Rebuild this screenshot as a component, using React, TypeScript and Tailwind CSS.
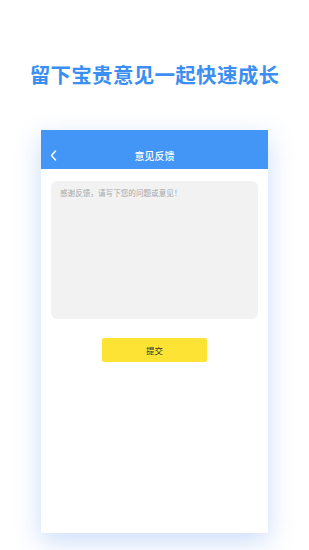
import React from "react";

export default function App() {
  const cjk = { fontFamily: '"Noto Sans CJK SC", "Noto Sans", sans-serif' };
  return (
    <div className="w-[309px] h-[550px] bg-white overflow-hidden flex flex-col items-center" style={cjk}>
      <div className="mt-[59px] h-[30px] flex items-center justify-center text-[20.5px] font-bold text-[#3b8ff2] tracking-[0.3px] leading-none">
        留下宝贵意见一起快速成长
      </div>
      <div className="mt-[41px] w-[227px] h-[403px] bg-white flex flex-col shadow-[0_8px_24px_rgba(80,140,240,0.3)]">
        <div className="h-[39px] bg-[#4496f6] flex items-center relative shrink-0">
          <svg className="absolute left-[9px] top-[20px]" width="7" height="11" viewBox="0 0 7 11" fill="none">
            <path d="M5.5 1 L1.5 5.5 L5.5 10" stroke="white" strokeWidth="1.5" strokeLinecap="round" strokeLinejoin="round" />
          </svg>
          <div className="flex-1 text-center text-white text-[10px] font-medium pt-[11px]">意见反馈</div>
        </div>
        <div className="px-[10px] pt-[12px]">
          <div className="h-[138px] rounded-[6px] bg-[#f2f2f2] px-[9px] pt-[6px] text-[7.6px] text-[#a8a8a8] leading-[12px]">
            感谢反馈，请写下您的问题或意见！
          </div>
        </div>
        <div className="flex justify-center mt-[19px]">
          <div className="w-[105px] h-[24px] rounded-[2px] bg-[#fde434] flex items-center justify-center text-[8.5px] text-[#333]">
            提交
          </div>
        </div>
      </div>
    </div>
  );
}
